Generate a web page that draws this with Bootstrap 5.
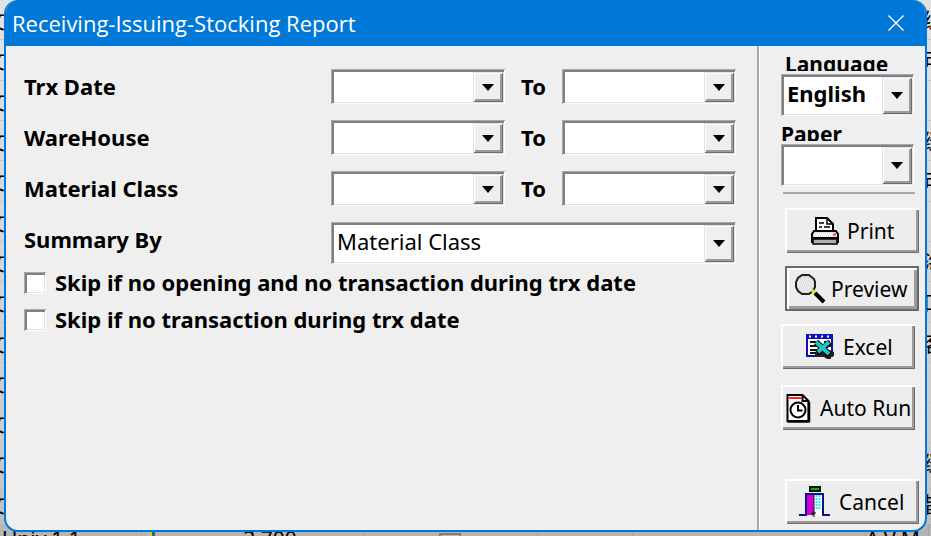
<!DOCTYPE html>
<html lang="en">
<head>
<meta charset="utf-8">
<meta name="viewport" content="width=device-width, initial-scale=1">
<title>Receiving-Issuing-Stocking Report</title>
<link href="https://cdn.jsdelivr.net/npm/bootstrap@5.3.0/dist/css/bootstrap.min.css" rel="stylesheet">
<style>
  body { font: 22px/28px "Noto Sans", "Open Sans", "Noto Sans CJK SC", sans-serif; color: #000; background: #c9c9c9; }
  .stage { position: relative; min-height: 100vh; padding: 0 4px 4px; overflow: hidden; }

  /* data grid of the window behind the dialog */
  .backdrop-grid { position: absolute; inset: 0; overflow: hidden; background: linear-gradient(#e2e2e2, #cccccc 80%, #bcbcbc); font-size: 21px; }
  .grid-line { flex: 1 1 0; min-height: 0; border-bottom: 1px solid #c4c4c4; padding: 0 2px; line-height: 40px; }
  .cell-start { width: 21px; margin-left: -18px; }
  .cell-end { width: 21px; margin-right: -15px; }
  .foot-line { flex: 0 0 12px; border: 0; background: #b5b5b5; line-height: 30px; overflow: hidden; }
  .foot-line > span { border-right: 1px solid #a5a5a5; height: 40px; }
  .tick-box { width: 22px; height: 22px; border: 2px solid #808080; margin-top: 9px; }
  .green-dot { width: 5px; height: 14px; background: #087c68; border-left: 2px solid #c6d51a; margin-top: 8px; }
  .w-a { flex: 141; } .w-b { flex: 101; } .w-c { flex: 121; } .w-d { flex: 175; } .w-e { flex: 95; } .w-f { flex: 235; } .w-g { flex: 63; }

  .report-dialog { position: relative; min-height: calc(100vh - 4px); background: #efefef; border: 2px solid #0078d7; border-top: 0; border-radius: 14px; overflow: hidden; }
  .title-bar { background: #0078d7; color: #fff; height: 46px; padding: 0 11px 0 6px; }
  .title-bar h1 { font: 22px/28px "Open Sans", "Noto Sans", sans-serif; }
  .close-btn { width: 36px; height: 36px; background: none; border: 0; padding: 0; color: #fff; }

  .criteria { padding: 23px 21px 16px 18px; }
  .criteria-grid { display: grid; grid-template-columns: 307fr 174fr 57fr 174fr; row-gap: 16px; align-items: center; }
  .strong-text { font-weight: 700; font-size: 22px; line-height: 28px; }
  .criteria label { padding-bottom: 2px; }
  .span-three { grid-column: span 3; }

  .combo { position: relative; min-width: 0; }
  .combo select { display: block; width: 100%; height: 35px; appearance: none; background: #fff; color: #000; border: 0; border-radius: 0; padding: 0 34px 0 6px; font: inherit;
    box-shadow: inset 1px 1px #a8a8a8, inset -1px -1px #fdfdfd, inset 3px 3px #808080, inset -2px -2px #e3e3e3; }
  .combo-tall select { height: 42px; padding-bottom: 5px; }
  .combo::after { content: ""; position: absolute; top: 3px; right: 2px; bottom: 2px; width: 30px; pointer-events: none;
    background: url("data:image/svg+xml,%3Csvg xmlns='http://www.w3.org/2000/svg' width='12' height='7'%3E%3Cpath d='M0 0h12L6 7z'/%3E%3C/svg%3E") 9px center / 12px 7px no-repeat #efefef;
    box-shadow: inset 1px 1px #e3e3e3, inset -1px -1px #6d6d6d, inset 2px 2px #fff, inset -3px -3px #9b9b9b; }

  .skip-row { gap: 9px; height: 37px; }
  .skip-row input { appearance: none; flex: none; width: 22px; height: 22px; margin: 0; background: #fff;
    box-shadow: inset 1px 1px #a8a8a8, inset -1px -1px #fff, inset 3px 3px #808080, inset -2px -2px #e3e3e3; }

  .side { width: 168px; flex: none; border-left: 2px solid #a9a9a9; box-shadow: inset 1px 0 #fff; padding: 6px 6px 6px 22px; }
  .cut-label { height: 19px; margin-bottom: 3px; overflow: hidden; line-height: 24px; font-size: 21px; font-weight: 700; }
  .paper-label { margin-top: 6px; }
  .side .combo { width: 133px; }
  .side .side-rule { width: 132px; height: 2px; background: #a9a9a9; margin: 6px 0 14px 2px; }
  .tool-btn { width: 134px; height: 45px; padding: 0; border: 0; background: #ededed; color: #000; display: flex; align-items: center; overflow: hidden; white-space: nowrap; font-size: 21px;
    box-shadow: inset 2px 2px #fff, inset -1px -1px #6d6d6d, inset -3px -3px #9b9b9b; }
  .tool-btn svg { flex: none; }
  .tool-btn.default-btn { padding-left: 10px; box-shadow: inset 0 0 0 2px #696969, inset 4px 4px #fff, inset -5px -5px #9b9b9b; }
  .tool-btn.cancel-btn { padding-left: 14px; }
  .shifted { margin-left: 4px; }
  .gap-s { margin-top: 13px; }
</style>
<script src="https://cdn.jsdelivr.net/npm/bootstrap@5.3.0/dist/js/bootstrap.bundle.min.js"></script>
</head>
<body>
<div class="stage">
  <div class="backdrop-grid d-flex flex-column" aria-hidden="true">
    <div class="grid-line d-flex justify-content-between"><span class="cell-start">文</span><span class="cell-end">编</span></div>
    <div class="grid-line d-flex justify-content-between"><span class="cell-start">文</span><span class="cell-end">可</span></div>
    <div class="grid-line d-flex justify-content-between"><span class="cell-start">文</span><span class="cell-end"></span></div>
    <div class="grid-line d-flex justify-content-between"><span class="cell-start">文</span><span class="cell-end">缝</span></div>
    <div class="grid-line d-flex justify-content-between"><span class="cell-start">文</span><span class="cell-end">可</span></div>
    <div class="grid-line d-flex justify-content-between"><span class="cell-start">文</span><span class="cell-end"></span></div>
    <div class="grid-line d-flex justify-content-between"><span class="cell-start">文</span><span class="cell-end">海</span></div>
    <div class="grid-line d-flex justify-content-between"><span class="cell-start">文</span><span class="cell-end">口</span></div>
    <div class="grid-line d-flex justify-content-between"><span class="cell-start">文</span><span class="cell-end">客</span></div>
    <div class="grid-line d-flex justify-content-between"><span class="cell-start">文</span><span class="cell-end"></span></div>
    <div class="grid-line d-flex justify-content-between"><span class="cell-start">文</span><span class="cell-end"></span></div>
    <div class="grid-line d-flex justify-content-between"><span class="cell-start">文</span><span class="cell-end">缝</span></div>
    <div class="grid-line d-flex justify-content-between"><span class="cell-start">文</span><span class="cell-end">皆</span></div>
    <div class="grid-line foot-line d-flex">
      <span class="w-a">Univ.1.1.</span><span class="w-b"><i class="green-dot d-block ms-2"></i></span><span class="w-c">3,700</span><span class="w-d d-flex justify-content-center"><i class="tick-box"></i></span><span class="w-e"></span><span class="w-f"></span><span class="w-g">A.V.M</span>
    </div>
  </div>

  <main class="report-dialog d-flex flex-column">
    <header class="title-bar d-flex align-items-center justify-content-between">
      <h1 class="m-0">Receiving-Issuing-Stocking Report</h1>
      <button type="button" class="close-btn d-flex align-items-center justify-content-center" aria-label="Close">
        <svg width="16" height="16" viewBox="0 0 16 16" stroke="currentColor" stroke-width="1.4"><path d="M.5.5l15 15M15.500 .5l-15 15"/></svg>
      </button>
    </header>

    <form class="d-flex flex-grow-1">
      <section class="criteria flex-grow-1">
        <div class="criteria-grid">
          <label class="strong-text" for="date-from">Trx Date</label>
          <div class="combo"><select id="date-from"><option></option></select></div>
          <label class="strong-text text-center" for="date-to">To</label>
          <div class="combo"><select id="date-to"><option></option></select></div>

          <label class="strong-text" for="house-from">WareHouse</label>
          <div class="combo"><select id="house-from"><option></option></select></div>
          <label class="strong-text text-center" for="house-to">To</label>
          <div class="combo"><select id="house-to"><option></option></select></div>

          <label class="strong-text" for="class-from">Material Class</label>
          <div class="combo"><select id="class-from"><option></option></select></div>
          <label class="strong-text text-center" for="class-to">To</label>
          <div class="combo"><select id="class-to"><option></option></select></div>

          <label class="strong-text pb-2" for="summary">Summary By</label>
          <div class="combo combo-tall span-three"><select id="summary"><option>Material Class</option></select></div>
        </div>
        <div class="skip-row d-flex align-items-center"><input type="checkbox" id="skip-open"><label class="strong-text" for="skip-open">Skip if no opening and no transaction during trx date</label></div>
        <div class="skip-row d-flex align-items-center"><input type="checkbox" id="skip-trx"><label class="strong-text" for="skip-trx">Skip if no transaction during trx date</label></div>
      </section>

      <aside class="side d-flex flex-column">
        <label class="cut-label ps-1" for="language">Language</label>
        <div class="combo combo-tall strong-text"><select id="language"><option>English</option></select></div>
        <label class="cut-label paper-label" for="paper">Paper</label>
        <div class="combo combo-tall"><select id="paper"><option></option></select></div>
        <div class="side-rule"></div>

        <button type="button" class="tool-btn shifted ps-4 gap-1">
          <svg width="34" height="32" viewBox="0 0 34 32" stroke="#000" stroke-width="2" fill="none">
            <path d="M7 17V3h11l6 6v8" fill="#fff"/><path d="M18 3v6h6M10 8h5M10 12h3M15 12h6" stroke-width="1.500"/>
            <path d="M5 16h22l2 3v8H3v-8z" fill="#e3e3e3"/><path d="M3 23h26"/><path d="M4 24h24v5H4z" fill="#b0b0b0" stroke-width="1.500"/>
            <path d="M5 19h19M6 21h18" stroke="#fff" stroke-dasharray="1 1"/><path d="M24 19.500h3" stroke="#f44"/>
          </svg>Print
        </button>
        <button type="button" class="tool-btn default-btn shifted gap-s gap-1">
          <svg width="32" height="32" viewBox="0 0 32 32">
            <path d="M7 2h7l5 4 1 3v5l-2 4-4 3H7l-4-3-2-4V9l2-4z" fill="#ddd" stroke="#222" stroke-width="2"/>
            <path d="M6 6h10M4 8h13M3 10h15M4 12h13M3 14h15M5 16h12M6 18h9" stroke="#fff" stroke-dasharray="1 1"/>
            <path d="M17 17l4 5" stroke="#e8e800" stroke-width="3"/><path d="M20 20l9 9" stroke="#000" stroke-width="4"/>
          </svg>Preview
        </button>
        <button type="button" class="tool-btn gap-s ps-4 gap-2">
          <svg width="30" height="28" viewBox="0 0 30 28">
            <path d="M2 2h25v21H2z" fill="#fff" stroke="#1010b8" stroke-width="2"/><path d="M1 1h27v5H1z" fill="#1010b8"/>
            <path d="M4 3.500h2m4 0h2m4 0h2m4 0h2" stroke="#fff" stroke-width="2"/>
            <path d="M5 9h7M5 13h7M5 17h7M19 9h6M21 13h5M5 20h6" stroke="#111" stroke-width="2"/>
            <path d="M10 20l4-3h10l5 2v4l-3 1v2h-4l-3-2h-9z" fill="#222"/>
            <path d="M11 9l14 13M25 9L12 20" stroke="#000" stroke-width="6"/><path d="M11 9l13 12M24 9L13 19" stroke="#20c4c4" stroke-width="4"/>
          </svg>Excel
        </button>
        <button type="button" class="tool-btn mt-3 ps-1 gap-2">
          <svg width="27" height="30" viewBox="0 0 26 30" fill="none" stroke="#000" stroke-width="2">
            <path d="M2 2h15l6 6v20H2z" fill="#fff"/><path d="M17 2v6h6"/><path d="M3 5h13" stroke="#f22"/>
            <circle cx="12.500" cy="17" r="7.500" fill="#fff"/><path d="M12.500 12v5.500H17"/><path d="M23.500 9v20M2 28.500h22" stroke-width="2.500"/>
          </svg>Auto Run
        </button>
        <button type="button" class="tool-btn cancel-btn shifted mt-auto gap-2">
          <svg width="32" height="34" viewBox="0 0 32 34">
            <path d="M11 2h10v4H11z" fill="#00b400" stroke="#111" stroke-width="2"/>
            <path d="M8 9h7v21H8z" fill="#d000d0"/><path d="M15 10h8v20h-8z" fill="#fff"/>
            <path d="M17.500 10v15M20.500 10v15" stroke="#20e8ff" stroke-width="2" stroke-dasharray="2 1"/>
            <path d="M13 30l3-3" fill="none" stroke="#222" stroke-width="3"/><path d="M15 10v18" stroke="#222"/>
            <path d="M0 30h7V9h17v21h7" fill="none" stroke="#10108c" stroke-width="2"/><path d="M2 32h11l3-3v3z" fill="#888"/><path d="M17 29l6 3v-4z" fill="#fff"/>
          </svg>Cancel
        </button>
      </aside>
    </form>
  </main>
</div>
</body>
</html>
